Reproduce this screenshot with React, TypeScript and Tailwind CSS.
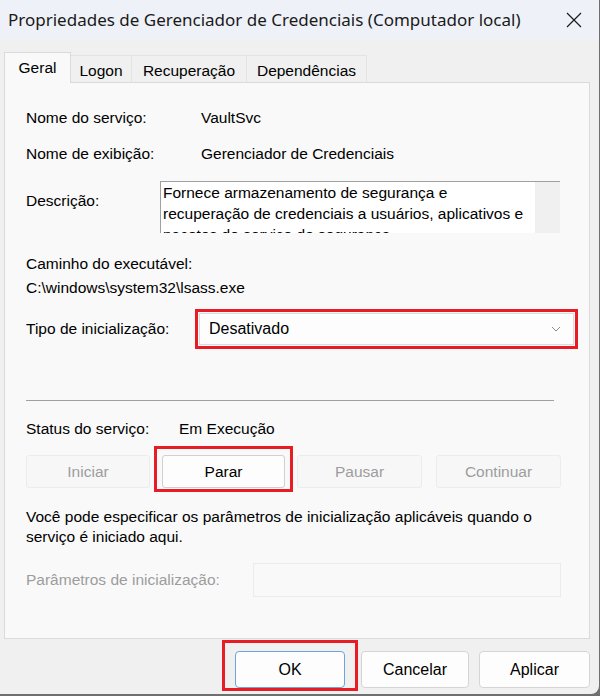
import React from "react";

const body = { fontFamily: '"Liberation Sans", Arial, sans-serif' };
const title = { fontFamily: '"Noto Sans", "Open Sans", sans-serif' };

const Tab = ({ label, active, w }: { label: string; active?: boolean; w: string }) => (
  <div
    className={
      active
        ? `relative z-10 -mb-px flex h-[31px] shrink-0 justify-center border border-b-0 border-[#dadada] bg-[#f9f9f9] pt-[3px] text-[15.5px] text-black ${w}`
        : `mt-[3px] flex h-[27px] shrink-0 justify-center border border-b-0 border-l-0 border-[#e3e3e3] bg-[#f0f0f0] pt-[3px] text-[15.5px] text-black ${w}`
    }
  >
    {label}
  </div>
);

const SvcButton = ({
  label,
  enabled,
  w,
}: {
  label: string;
  enabled?: boolean;
  w: string;
}) => (
  <div
    className={`flex h-[33px] items-center justify-center rounded-[3px] border text-[15.5px] ${w} ${
      enabled
        ? "border-[#d0d0d0] bg-[#fdfdfd] text-black"
        : "border-[#ececec] bg-[#f7f7f7] text-[#9d9d9d]"
    }`}
  >
    {label}
  </div>
);

export default function App() {
  return (
    <div className="h-[696px] w-[600px] overflow-hidden bg-[#6f6f6f]" style={body}>
      <div className="h-[694px] w-[599px] overflow-hidden rounded-br-[8px] bg-[#f0f0f0]">
        {/* title bar */}
        <div className="flex h-[40px] items-center justify-between bg-[#eef2f8] pl-[8px] pr-[17px]">
          <span className="text-[17px] text-[#1a1a1a]" style={title}>
            Propriedades de Gerenciador de Credenciais (Computador local)
          </span>
          <svg width="16" height="16" viewBox="0 0 16 16" className="text-[#1a1a1a]">
            <path d="M1 1 L15 15 M15 1 L1 15" stroke="currentColor" strokeWidth="1.2" fill="none" />
          </svg>
        </div>

        {/* tabs */}
        <div className="mt-[12px] flex pl-[4px]">
          <Tab label="Geral" active w="w-[67px]" />
          <Tab label="Logon" w="w-[61px]" />
          <Tab label="Recuperação" w="w-[115px]" />
          <Tab label="Dependências" w="w-[120px]" />
        </div>

        {/* panel */}
        <div className="ml-[4px] h-[557px] w-[586px] border border-[#dadada] bg-[#f9f9f9] px-[21px] text-[15.5px] text-black">
          <div className="mt-[25px] flex h-[20px] items-center">
            <span className="w-[175px]">Nome do serviço:</span>
            <span>VaultSvc</span>
          </div>
          <div className="mt-[16px] flex h-[20px] items-center">
            <span className="w-[175px]">Nome de exibição:</span>
            <span>Gerenciador de Credenciais</span>
          </div>
          <div className="mt-[17px] flex">
            <span className="mt-[8px] w-[134px]">Descrição:</span>
            <div className="flex h-[52px] w-[400px] overflow-hidden border-l border-t border-[#a0a0a0] bg-white">
              <div className="flex-1 whitespace-nowrap pl-[2px] leading-[21px]">
                Fornece armazenamento de segurança e
                <br />
                recuperação de credenciais a usuários, aplicativos e
                <br />
                pacotes de serviço de segurança.
              </div>
              <div className="w-[25px] shrink-0 bg-[#f0f0f0]"></div>
            </div>
          </div>
          <div className="mt-[19px] leading-[24px]">
            Caminho do executável:
            <br />
            C:\windows\system32\lsass.exe
          </div>
          <div className="mt-[9px] flex items-center">
            <span className="w-[169px] shrink-0">Tipo de inicialização:</span>
            <div className="shrink-0 border-[3px] border-[#e81c24] p-[1px]">
              <div className="flex h-[32px] w-[375px] items-center justify-between border border-[#dcdcdc] bg-[#fdfdfd] pl-[9px] pr-[12px] text-[16px]">
                <span>Desativado</span>
                <svg width="10" height="6" viewBox="0 0 10 6">
                  <path d="M1 1 L5 5 L9 1" stroke="#8a8a8a" strokeWidth="1" fill="none" />
                </svg>
              </div>
            </div>
          </div>

          <div className="mt-[51px] h-px w-[528px] bg-[#a0a0a0]"></div>

          <div className="mt-[18px] flex h-[20px] items-center">
            <span className="w-[153px]">Status do serviço:</span>
            <span>Em Execução</span>
          </div>

          <div className="mt-[7px] flex items-start">
            <div className="mt-[9px]">
              <SvcButton label="Iniciar" w="w-[124px]" />
            </div>
            <div className="ml-[4px] border-[3px] border-[#e81c24] px-[5px] pb-[1px] pt-[6px]">
              <SvcButton label="Parar" enabled w="w-[123px]" />
            </div>
            <div className="ml-[4px] mt-[9px]">
              <SvcButton label="Pausar" w="w-[125px]" />
            </div>
            <div className="ml-[14px] mt-[9px]">
              <SvcButton label="Continuar" w="w-[125px]" />
            </div>
          </div>

          <p className="mt-[15px] whitespace-nowrap leading-[20px]">
            Você pode especificar os parâmetros de inicialização aplicáveis quando o
            <br />
            serviço é iniciado aqui.
          </p>

          <div className="mt-[16px] flex items-center">
            <span className="w-[227px] text-[#9d9d9d]">Parâmetros de inicialização:</span>
            <div className="h-[34px] w-[308px] border border-[#ececec] bg-[#f9f9f9]"></div>
          </div>
        </div>

        {/* bottom buttons */}
        <div className="mt-px flex items-start justify-end pr-[9px]">
          <div className="border-[3px] border-[#e81c24] px-[10px] pb-0 pt-[8px]">
            <div className="flex h-[37px] w-[110px] items-center justify-center rounded-[4px] border border-[#6aa6dc] bg-[#fdfdfd] text-[16px] text-black">
              OK
            </div>
          </div>
          <div className="ml-[3px] mt-[11px] flex h-[37px] w-[108px] items-center justify-center rounded-[4px] border border-[#d5d5d5] bg-[#fdfdfd] text-[16px] text-black">
            Cancelar
          </div>
          <div className="ml-[10px] mt-[11px] flex h-[37px] w-[111px] items-center justify-center rounded-[4px] border border-[#d5d5d5] bg-[#fdfdfd] text-[16px] text-black">
            Aplicar
          </div>
        </div>
      </div>
    </div>
  );
}
